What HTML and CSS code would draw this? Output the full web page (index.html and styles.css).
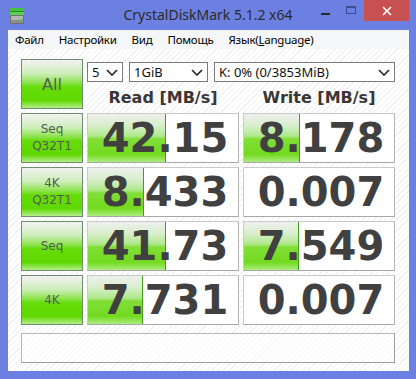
FILE: index.html
```html
<!DOCTYPE html>
<html lang="ru">
<head>
<meta charset="UTF-8">
<title>CrystalDiskMark 5.1.2 x64</title>
<link rel="stylesheet" href="styles.css">
</head>
<body>

<div class="window">
    <div class="titlebar">
        <div class="tb-left">
            <svg class="app-icon" width="14" height="16" viewBox="0 0 14 16">
                <rect x="0" y="0" width="14" height="3" fill="#46c23c"/>
                <rect x="0" y="3" width="14" height="1" fill="#2e8a2a"/>
                <rect x="0" y="4" width="14" height="3" fill="#5bd24f"/>
                <rect x="0" y="7" width="14" height="9" rx="1.5" fill="#707070"/>
                <rect x="1" y="8" width="12" height="4" fill="#b4b4b4"/>
                <rect x="1" y="12" width="12" height="3" fill="#8c8c8c"/>
                <rect x="10" y="11" width="2" height="3" fill="#3fd23f"/>
            </svg>
        </div>
        <div class="title">CrystalDiskMark 5.1.2 x64</div>
        <div class="tb-right">
            <div class="cap-btn cap-min"><span></span></div>
            <div class="cap-btn cap-max"><span></span></div>
            <div class="cap-btn cap-close">
                <svg width="10" height="10" viewBox="0 0 10 10">
                    <path d="M1 1 L9 9 M9 1 L1 9" stroke="#fff" stroke-width="1.6"/>
                </svg>
            </div>
        </div>
    </div>

    <div class="client">
        <div class="menu">
            <span>Файл</span>
            <span>Настройки</span>
            <span>Вид</span>
            <span>Помощь</span>
            <span>Язык(<u>L</u>anguage)</span>
        </div>

        <div class="main">
            <div class="grid">
                <div class="btn btn-all">All</div>
                <div class="top">
                    <div class="selects">
                        <div class="combo combo-count">5 <svg width="12" height="7" viewBox="0 0 12 7"><path d="M1 1 L6 6 L11 1" fill="none" stroke="#222" stroke-width="1.6"/></svg></div>
                        <div class="combo combo-size">1GiB <svg width="12" height="7" viewBox="0 0 12 7"><path d="M1 1 L6 6 L11 1" fill="none" stroke="#222" stroke-width="1.6"/></svg></div>
                        <div class="combo combo-drive">K: 0% (0/3853MiB) <svg width="12" height="7" viewBox="0 0 12 7"><path d="M1 1 L6 6 L11 1" fill="none" stroke="#222" stroke-width="1.6"/></svg></div>
                    </div>
                    <div class="heads">
                        <div>Read [MB/s]</div>
                        <div>Write [MB/s]</div>
                    </div>
                </div>

                <div class="btn">Seq<br>Q32T1</div>
                <div class="cell"><div class="bar" style="width:78px"></div><div class="val">42.15</div></div>
                <div class="cell"><div class="bar" style="width:56px"></div><div class="val">8.178</div></div>

                <div class="btn">4K<br>Q32T1</div>
                <div class="cell"><div class="bar" style="width:56px"></div><div class="val">8.433</div></div>
                <div class="cell"><div class="val">0.007</div></div>

                <div class="btn">Seq</div>
                <div class="cell"><div class="bar" style="width:78px"></div><div class="val">41.73</div></div>
                <div class="cell"><div class="bar" style="width:55px"></div><div class="val">7.549</div></div>

                <div class="btn">4K</div>
                <div class="cell"><div class="bar" style="width:55px"></div><div class="val">7.731</div></div>
                <div class="cell"><div class="val">0.007</div></div>
            </div>
            <div class="status"></div>
        </div>
    </div>
</div>

</body>
</html>
```

FILE: styles.css
```css
/* Окно */
body {
    margin: 0;
    background-color: #6b80e0;
    font-family: "Noto Sans", "DejaVu Sans", sans-serif;
    color: #222;
}
.window {
    width: 416px;
    height: 379px;
    display: flex;
    flex-direction: column;
    background-color: #6b80e0;
}
/* Заголовок */
.titlebar {
    height: 30px;
    display: grid;
    grid-template-columns: 1fr auto 1fr;
}
.tb-left {
    padding: 7px 0 0 10px;
}
.title {
    font-size: 14px;
    line-height: 30px;
    color: #2b2b2b;
}
.tb-right {
    display: flex;
    justify-content: flex-end;
    align-items: flex-start;
    padding-right: 7px;
}
.cap-btn {
    height: 21px;
    display: flex;
    align-items: center;
    justify-content: center;
}
.cap-min {
    width: 26px;
}
.cap-min span {
    width: 9px;
    height: 2px;
    margin-top: 6px;
    background-color: #2a2a2a;
}
.cap-max {
    width: 26px;
}
.cap-max span {
    width: 8px;
    height: 5px;
    margin-top: -2px;
    border: 1px solid #3d4c8c;
    border-top-width: 2px;
}
.cap-close {
    width: 45px;
    background-color: #c75050;
}
/* Клиентская область */
.client {
    flex: 1;
    margin: 0 7px 8px 8px;
    display: flex;
    flex-direction: column;
}
.menu {
    height: 19px;
    display: flex;
    align-items: center;
    gap: 15px;
    padding-left: 7px;
    background-color: #f5f6f7;
    font-size: 11.5px;
    letter-spacing: -0.25px;
    color: #000;
}
.main {
    flex: 1;
    padding: 10px 14px 8px 13px;
    background: repeating-linear-gradient(135deg, #ffffff 0 3px, #f1f1f1 3px 4px);
}
.grid {
    display: grid;
    grid-template-columns: 62px 152px 152px;
    grid-auto-rows: 50px;
    gap: 4px;
}
/* Кнопки тестов */
.btn {
    box-sizing: border-box;
    border: 1px solid #6f8c6f;
    display: flex;
    align-items: center;
    justify-content: center;
    text-align: center;
    font-family: "DejaVu Sans", sans-serif;
    font-size: 12px;
    line-height: 17px;
    color: #525e52;
    background: linear-gradient(#f2f2f2 0%, #cdeeba 28%, #8ae24a 48%, #66dc08 56%, #5fd800 84%, #b4ee8c 100%);
}
.btn-all {
    font-size: 16px;
}
/* Верхняя строка */
.top {
    grid-column: 2 / 4;
    display: flex;
    flex-direction: column;
}
.selects {
    display: flex;
    gap: 6px;
    margin-top: 3px;
}
.combo {
    box-sizing: border-box;
    height: 20px;
    border: 1px solid #7a7a7a;
    background-color: #fff;
    display: flex;
    align-items: center;
    justify-content: space-between;
    padding: 0 4px;
    font-size: 13px;
    color: #111;
}
.combo-count {
    width: 36px;
}
.combo-size {
    width: 79px;
}
.combo-drive {
    flex: 1;
}
.heads {
    display: grid;
    grid-template-columns: 152px 152px;
    gap: 4px;
    margin-top: 6px;
    font-family: "DejaVu Sans", sans-serif;
    font-weight: bold;
    font-size: 16px;
    line-height: 20px;
    color: #3a3634;
    text-align: center;
}
/* Результаты */
.cell {
    box-sizing: border-box;
    display: grid;
    border: 1px solid #cacaca;
    border-right-color: #b4b4b4;
    border-bottom-color: #a8a8a8;
    background-color: #fff;
}
.cell > * {
    grid-area: 1 / 1;
}
.bar {
    justify-self: start;
    box-sizing: border-box;
    border-right: 1px solid #3f9e1a;
    background: linear-gradient(#eef0ee 0%, #d8eecc 24%, #b0e88c 46%, #82de38 52%, #72da1e 84%, #aeec80 100%);
}
.val {
    font-family: "DejaVu Sans", sans-serif;
    font-weight: bold;
    font-size: 40px;
    line-height: 48px;
    text-align: center;
    padding-left: 4px;
    color: #404040;
}
.status {
    height: 30px;
    box-sizing: border-box;
    margin-top: 8px;
    border: 1px solid #b8b8b8;
    border-right-color: #9c9c9c;
    border-bottom-color: #9c9c9c;
    background-color: rgba(255, 255, 255, 0.5);
}
```
